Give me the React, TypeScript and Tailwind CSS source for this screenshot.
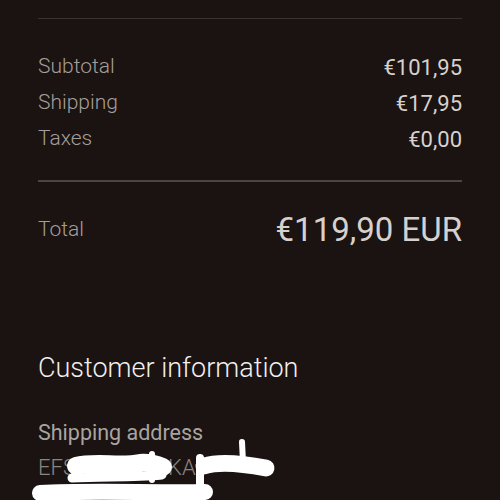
export default function App() {
  const rows = [
    { label: "Subtotal", value: "€101,95" },
    { label: "Shipping", value: "€17,95" },
    { label: "Taxes", value: "€0,00" },
  ];

  return (
    <div className="relative w-[500px] h-[500px] overflow-hidden bg-[#1a1311] font-['Roboto',sans-serif]">
      <div className="px-[38px] pt-[18px]">
        <div className="h-px bg-[#3a3331]" />

        <div className="mt-[30px]">
          {rows.map((r) => (
            <div key={r.label} className="flex items-center justify-between h-[36px]">
              <span className="text-[21px] font-light text-[#a59f9c]">{r.label}</span>
              <span className="text-[22px] text-[#d6d1ce]">{r.value}</span>
            </div>
          ))}
        </div>

        <div className="mt-[23px] h-[2px] bg-[#4a4442]" />

        <div className="mt-[26px] flex items-center justify-between h-[44px]">
          <span className="text-[21px] font-light text-[#a59f9c]">Total</span>
          <span className="text-[33px] text-[#d6d1ce]">€119,90 EUR</span>
        </div>

        <h2 className="mt-[98px] text-[27px] font-light text-[#f2efed] leading-[36px]">
          Customer information
        </h2>

        <div className="mt-[32px] text-[21.5px] text-[#aaa4a1] leading-[30px]">Shipping address</div>

        <div className="relative mt-[5px] h-[30px]">
          <span className="text-[22px] font-light text-[#8a8482] leading-[30px]">EFS</span>
          <span className="absolute left-[130px] text-[22px] font-light text-[#8a8482] leading-[30px]">KA</span>
        </div>
      </div>

      {/* redaction scribbles */}
      <svg className="absolute left-0 top-[430px]" width="300" height="70" viewBox="0 0 300 70">
        <g stroke="#fff" strokeLinecap="round" strokeLinejoin="round" fill="none">
          <path d="M76 36 C95 31 120 37 140 33 C150 32 158 35 163 37" strokeWidth="18" />
          <path d="M72 48 C100 46 130 48 162 45" strokeWidth="9" />
          <path d="M152 24 L152 50" strokeWidth="6" />
          <path d="M204 36 C220 31 245 34 266 38" strokeWidth="17" />
          <path d="M200 28 L200 54" strokeWidth="8" />
          <path d="M242 12 L243 32" strokeWidth="6" />
          <path d="M40 63 C90 60 150 63 205 62" strokeWidth="16" />
        </g>
      </svg>
    </div>
  );
}
